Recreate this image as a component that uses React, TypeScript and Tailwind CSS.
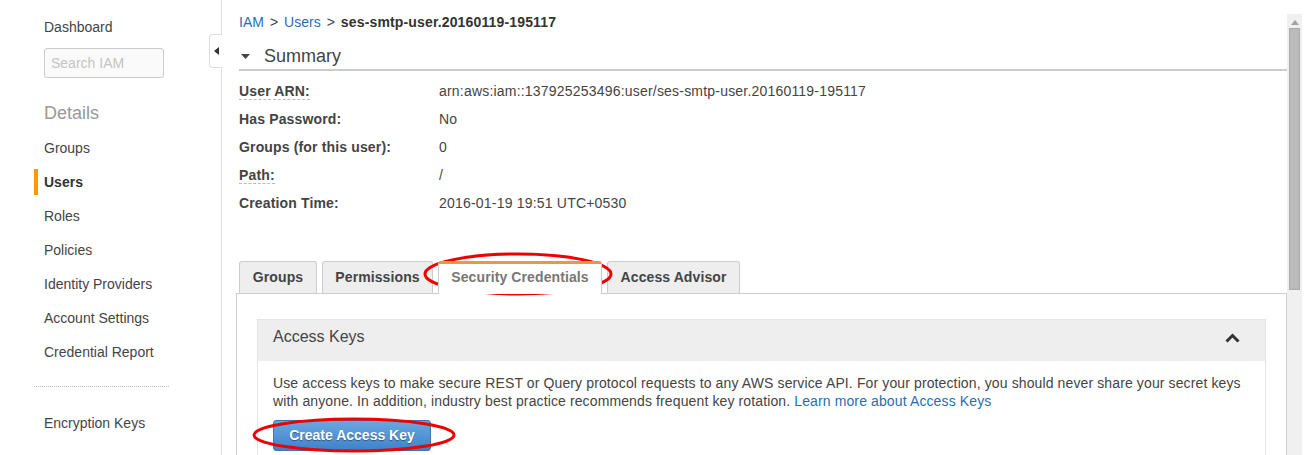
import React from "react";

const navItems = ["Groups", "Users", "Roles", "Policies", "Identity Providers", "Account Settings", "Credential Report"];

const summaryRows = [
  { label: "User ARN:", value: "arn:aws:iam::137925253496:user/ses-smtp-user.20160119-195117", dashed: true },
  { label: "Has Password:", value: "No", dashed: false },
  { label: "Groups (for this user):", value: "0", dashed: false },
  { label: "Path:", value: "/", dashed: true },
  { label: "Creation Time:", value: "2016-01-19 19:51 UTC+0530", dashed: false },
];

function Sidebar() {
  return (
    <aside className="relative w-[222px] shrink-0 border-r border-[#ddd] pt-[17px]">
      <div className="pl-[44px]">
        <div className="h-5 leading-5">Dashboard</div>
        <input
          placeholder="Search IAM"
          className="mt-[11px] h-[30px] w-[120px] rounded-[3px] border border-[#ccc] bg-[#fafafa] px-[6px] text-[14px] placeholder:text-[#c4c4c4] outline-none"
        />
        <div className="mt-[23px] h-6 text-[18px] leading-6 text-[#999]">Details</div>
      </div>
      <ul className="mt-[6px]">
        {navItems.map((item) => (
          <li key={item} className="relative flex h-[34px] items-center pl-[44px]">
            {item === "Users" ? (
              <>
                <span className="absolute left-[34px] top-[4px] h-[26px] w-[4px] bg-[#f90]" />
                <span className="font-bold text-[#333]">{item}</span>
              </>
            ) : (
              item
            )}
          </li>
        ))}
      </ul>
      <div className="ml-[34px] mt-[17px] w-[135px] border-t border-dotted border-[#bbb]" />
      <div className="mt-[18px] flex h-[36px] items-center pl-[44px]">Encryption Keys</div>

      <div className="absolute left-[209px] top-[34px] flex h-[34px] w-[13px] items-center justify-center rounded-l-[4px] border border-r-0 border-[#ddd] bg-white">
        <svg width="5" height="8" viewBox="0 0 5 8">
          <path d="M5 0 L0 4 L5 8 Z" fill="#333" />
        </svg>
      </div>
    </aside>
  );
}

function Tabs() {
  const tabs = [
    { name: "Groups", w: "w-[78px]" },
    { name: "Permissions", w: "w-[111px]" },
    { name: "Security Credentials", w: "w-[164px]", active: true },
    { name: "Access Advisor", w: "w-[133px]" },
  ];
  return (
    <div className="flex gap-[5px] pl-[3px]">
      {tabs.map((t) =>
        t.active ? (
          <div
            key={t.name}
            className={`${t.w} relative z-10 -mb-px flex h-[33px] items-center justify-center rounded-t-[3px] border border-b-0 border-[#ccc] border-t-[3px] border-t-[#e59a45] bg-white pb-[4px] font-bold tracking-[0.1px] text-[#777]`}
          >
            {t.name}
          </div>
        ) : (
          <div
            key={t.name}
            className={`${t.w} flex h-[32px] items-center justify-center rounded-t-[3px] border border-b-0 border-[#ccc] bg-[#eee] font-bold tracking-[0.1px] text-[#444]`}
          >
            {t.name}
          </div>
        )
      )}
    </div>
  );
}

export default function App() {
  return (
    <div className="relative flex h-[455px] w-[1311px] overflow-hidden bg-white font-['Liberation_Sans',Arial,sans-serif] text-[14px] text-[#444]">
      <Sidebar />

      <main className="min-w-0 flex-1 pl-[17px] pt-[13px]">
        <nav className="flex h-[18px] items-center gap-[6px] leading-[18px]">
          <span className="text-[#1f6fb5]">IAM</span>
          <span>&gt;</span>
          <span className="text-[#1f6fb5]">Users</span>
          <span>&gt;</span>
          <span className="font-bold tracking-[0.15px] text-[#333]">ses-smtp-user.20160119-195117</span>
        </nav>

        <div className="mt-[13px] flex h-[27px] items-center gap-[14px] border-b-2 border-[#ccc] pb-[1px] pl-[2px] text-[18px] text-[#444]">
          <svg width="9" height="5" viewBox="0 0 9 5">
            <path d="M0 0 L9 0 L4.5 5 Z" fill="#444" />
          </svg>
          <span>Summary</span>
        </div>

        <div className="mt-[6px]">
          {summaryRows.map((r) => (
            <div key={r.label} className="flex h-[28px] items-center">
              <div className="w-[200px] shrink-0">
                <span className={`font-bold tracking-[0.15px] ${r.dashed ? "border-b border-dashed border-[#bbb]" : ""}`}>{r.label}</span>
              </div>
              <div className="whitespace-nowrap tracking-[0.2px]">{r.value}</div>
            </div>
          ))}
        </div>

        <div className="mt-[44px] -ml-[3px]">
          <Tabs />
          <div className="h-[200px] border-l border-r border-t border-[#ccc] px-[20px] pt-[25px]">
            <div className="border border-[#e4e4e4]">
              <div className="flex h-[41px] items-start justify-between bg-[#eee] pl-[15px] pr-[25px] pt-[8px] text-[16px] leading-[18px] text-[#444]">
                <span>Access Keys</span>
                <svg width="15" height="10" viewBox="0 0 15 10" className="mt-[5px]">
                  <path d="M1.5 8.5 L7.5 2.5 L13.5 8.5" stroke="#333" strokeWidth="3" fill="none" />
                </svg>
              </div>
              <div className="px-[15px] pt-[13px] pb-[20px]">
                <p className="leading-[18px] tracking-[0.12px]">
                  Use access keys to make secure REST or Query protocol requests to any AWS service API. For your protection, you should never share your secret keys with anyone. In addition, industry best practice recommends frequent key rotation.{" "}
                  <span className="text-[#1f6fb5]">Learn more about Access Keys</span>
                </p>
                <button className="mt-[10px] h-[31px] w-[158px] rounded-[3px] border border-[#3a76b4] bg-gradient-to-b from-[#6aa6e0] to-[#3f83cc] text-[14px] font-bold text-white [text-shadow:0_1px_1px_rgba(0,0,0,0.4)]">
                  Create Access Key
                </button>
              </div>
            </div>
          </div>
        </div>
      </main>

      <div className="mt-[14px] flex w-[15px] shrink-0 flex-col items-center bg-[#f0f0f0]">
        <svg width="8" height="5" viewBox="0 0 8 5" className="mt-[6px]">
          <path d="M0 5 L4 0 L8 5 Z" fill="#a3a3a3" />
        </svg>
        <div className="mt-[3px] h-[262px] w-[11px] border border-[#aaa] bg-[#bbb]" />
      </div>
      <div className="w-[9px] shrink-0" />

      <svg className="pointer-events-none absolute left-0 top-0" width="1311" height="455">
        <ellipse cx="518" cy="274" rx="93" ry="20" fill="none" stroke="#e00" strokeWidth="3" />
        <ellipse cx="354" cy="435" rx="100" ry="16" fill="none" stroke="#e00" strokeWidth="3" />
      </svg>
    </div>
  );
}
